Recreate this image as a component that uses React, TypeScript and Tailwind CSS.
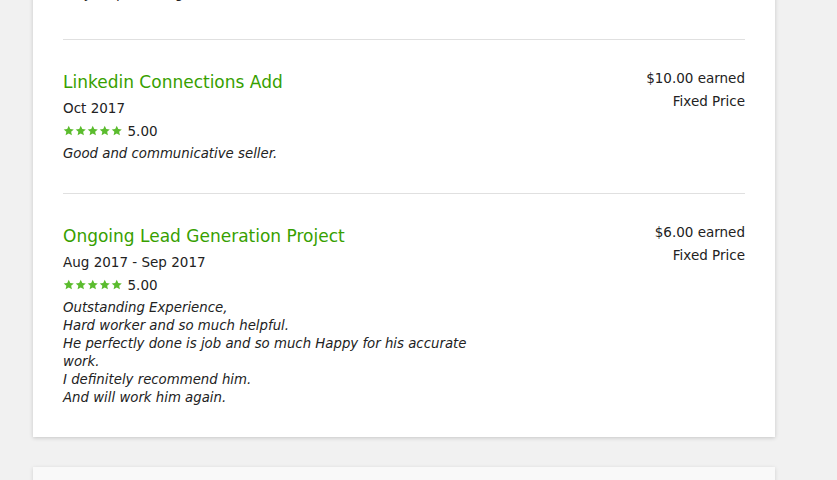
import React from "react";

type Job = {
  title: string;
  dates: string;
  rating: string;
  comment: string[];
  earned: string;
  kind: string;
};

const jobs: Job[] = [
  {
    title: "Linkedin Connections Add",
    dates: "Oct 2017",
    rating: "5.00",
    comment: ["Good and communicative seller."],
    earned: "$10.00 earned",
    kind: "Fixed Price",
  },
  {
    title: "Ongoing Lead Generation Project",
    dates: "Aug 2017 - Sep 2017",
    rating: "5.00",
    comment: [
      "Outstanding Experience,",
      "Hard worker and so much helpful.",
      "He perfectly done is job and so much Happy for his accurate work.",
      "I definitely recommend him.",
      "And will work him again.",
    ],
    earned: "$6.00 earned",
    kind: "Fixed Price",
  },
];

function Stars() {
  return (
    <span className="flex items-center gap-[0.5px]">
      {[0, 1, 2, 3, 4].map((i) => (
        <svg key={i} viewBox="0 0 24 24" className="w-[11.5px] h-[11.5px] fill-[#5bbc2e]">
          <path d="M12 1.5l3.2 7 7.3.7-5.5 4.9 1.6 7.4L12 17.7l-6.6 3.8 1.6-7.4L1.5 9.2l7.3-.7z" />
        </svg>
      ))}
    </span>
  );
}

function JobRow({ job }: { job: Job }) {
  return (
    <div className="flex justify-between pt-[31px] pb-[30px] border-t border-[#e0e0e0]">
      <div className="w-[430px]">
        <h3 className="text-[17px] leading-[22px] text-[#37a000]">{job.title}</h3>
        <div className="mt-[4px] text-[13.5px] leading-[22px] text-[#222]">{job.dates}</div>
        <div className="mt-[1px] flex items-center gap-[5px] text-[13.5px] leading-[22px] text-[#222]">
          <Stars />
          <span>{job.rating}</span>
        </div>
        <div className="mt-[3px] text-[13.3px] leading-[18px] italic text-[#222]">
          {job.comment.map((line, i) => (
            <div key={i}>{line}</div>
          ))}
        </div>
      </div>
      <div className="-mt-[4px] text-right text-[13.5px] leading-[23px] text-[#222]">
        <div>{job.earned}</div>
        <div>{job.kind}</div>
      </div>
    </div>
  );
}

export default function App() {
  return (
    <div
      className="h-[480px] overflow-hidden bg-[#f1f1f1] pl-[33px]"
      style={{ fontFamily: '"DejaVu Sans", "Open Sans", sans-serif' }}
    >
      <div className="w-[742px] -mt-[15px] bg-white px-[30px] shadow-[0_1px_4px_rgba(0,0,0,0.18)]">
        <div className="pb-[36px] text-[13.3px] leading-[18px] italic text-[#222]">
          Very helpful and good to work with.
        </div>
        {jobs.map((job) => (
          <JobRow key={job.title} job={job} />
        ))}
      </div>
      <div className="mt-[30px] w-[742px] h-[60px] bg-[#f9f9f9] shadow-[0_1px_4px_rgba(0,0,0,0.14)]" />
    </div>
  );
}
